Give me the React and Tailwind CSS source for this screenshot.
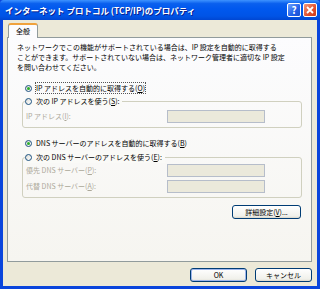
import React from "react";

const font = { fontFamily: '"Noto Sans CJK JP", "Noto Sans", sans-serif' };

function Radio({ checked }) {
  return (
    <span className="relative flex h-[7px] w-[7px] shrink-0 items-center justify-center rounded-full border border-[#1C5180] bg-[linear-gradient(135deg,#DCDCD6,#FFFFFF)]">
      {checked && <span className="h-[3px] w-[3px] rounded-full bg-[#2BAE2B]" />}
    </span>
  );
}

function U({ children }) {
  return <span className="underline underline-offset-1">{children}</span>;
}

function RadioRow({ checked, focus, children, legend }) {
  return (
    <div
      className={
        "flex h-[12px] w-fit items-center gap-[3px] " +
        (legend ? "-mt-[7px] ml-[2px] bg-[#FAFAF7] pr-[2px]" : "ml-[17px]")
      }
    >
      <Radio checked={checked} />
      <span
        className={
          "whitespace-nowrap leading-[10px] " +
          (focus ? "border border-dotted border-[#555]" : "border border-transparent")
        }
      >
        {children}
      </span>
    </div>
  );
}

function Field({ label, className = "" }) {
  return (
    <div className={"flex items-center " + className}>
      <span className="w-[144px] whitespace-nowrap pl-[3px] text-[#ACA899]">{label}</span>
      <div className="h-[13px] w-[98px] border border-[#B6BDCA] bg-[#EBE9DB]" />
    </div>
  );
}

function XpButton({ children, primary, className = "" }) {
  return (
    <div
      className={
        "flex h-[14px] items-center justify-center rounded-[3px] border border-[#003C74] bg-[linear-gradient(to_bottom,#FFFFFF,#F0F0EA_85%,#D8D5C8)] " +
        (primary ? "shadow-[inset_0_0_0_1px_#9DB5EC] " : "") +
        className
      }
    >
      {children}
    </div>
  );
}

export default function App() {
  return (
    <div
      className="flex h-[289px] w-[320px] flex-col bg-[#0A45DC] text-[7px] text-black"
      style={font}
    >
      {/* title bar */}
      <div className="flex h-[20px] shrink-0 items-center rounded-t-[4px] bg-[linear-gradient(to_bottom,#3E93FF_0%,#0A60EE_18%,#0058EE_45%,#0054E6_80%,#0046D2_100%)] pl-[5px] pr-[3px]">
        <span className="text-[8.5px] font-bold text-white [text-shadow:1px_1px_0_#0A1E8C]">
          インターネット プロトコル (TCP/IP)のプロパティ
        </span>
        <div className="ml-auto flex gap-[2px]">
          <div className="flex h-[14px] w-[14px] items-center justify-center rounded-[2px] border border-white bg-[linear-gradient(135deg,#6FA2FF,#2260E8_60%,#1A4FD0)] text-[10px] font-bold leading-none text-white">
            ?
          </div>
          <div className="flex h-[14px] w-[14px] items-center justify-center rounded-[2px] border border-white bg-[linear-gradient(135deg,#F29A80,#E2502E_60%,#C8391A)]">
            <svg width="8" height="8" viewBox="0 0 8 8">
              <path d="M1 1L7 7M7 1L1 7" stroke="white" strokeWidth="1.8" />
            </svg>
          </div>
        </div>
      </div>

      {/* body */}
      <div className="mx-[3px] mb-[3px] flex flex-1 flex-col bg-[#ECE9D8] pt-[3px]">
        <div className="relative z-10 -mb-px ml-[5px] flex h-[15px] w-[30px] items-center justify-center rounded-t-[3px] border-x border-t-2 border-x-[#919B9C] border-t-[#F0A23C] bg-[#FCFCFE]">
          全般
        </div>
        <div className="ml-[4px] flex h-[225px] w-[305px] flex-col border border-[#919B9C] bg-[linear-gradient(to_bottom,#FCFCFE,#F6F5F0)]">
          <p className="pl-[9px] pt-[4px] leading-[10px]">
            ネットワークでこの機能がサポートされている場合は、IP 設定を自動的に取得する
            <br />
            ことができます。サポートされていない場合は、ネットワーク管理者に適切な IP 設定
            <br />
            を問い合わせてください。
          </p>

          <div className="mt-[10px]">
            <RadioRow checked focus>
              IP アドレスを自動的に取得する(<U>O</U>)
            </RadioRow>
          </div>

          <div className="ml-[14px] mt-[7px] flex w-[280px] flex-col rounded-[3px] border border-[#D0D0BF] pb-[4px]">
            <RadioRow legend>
              次の IP アドレスを使う(<U>S</U>):
            </RadioRow>
            <Field className="mt-[3px]" label={<>IP アドレス(<U>I</U>):</>} />
          </div>

          <div className="mt-[9px]">
            <RadioRow checked>
              DNS サーバーのアドレスを自動的に取得する(<U>B</U>)
            </RadioRow>
          </div>

          <div className="ml-[14px] mt-[8px] flex w-[280px] flex-col rounded-[3px] border border-[#D0D0BF] pb-[4px]">
            <RadioRow legend>
              次の DNS サーバーのアドレスを使う(<U>E</U>):
            </RadioRow>
            <Field className="mt-[1px]" label={<>優先 DNS サーバー(<U>P</U>):</>} />
            <Field className="mt-[3px]" label={<>代替 DNS サーバー(<U>A</U>):</>} />
          </div>

          <div className="mr-[10px] mt-[7px] flex justify-end">
            <XpButton className="w-[69px]">
              詳細設定(<U>V</U>)...
            </XpButton>
          </div>
        </div>

        <div className="mr-[5px] mt-[6px] flex justify-end gap-[8px]">
          <XpButton primary className="w-[57px]">
            OK
          </XpButton>
          <XpButton className="w-[57px]">キャンセル</XpButton>
        </div>
      </div>
    </div>
  );
}
